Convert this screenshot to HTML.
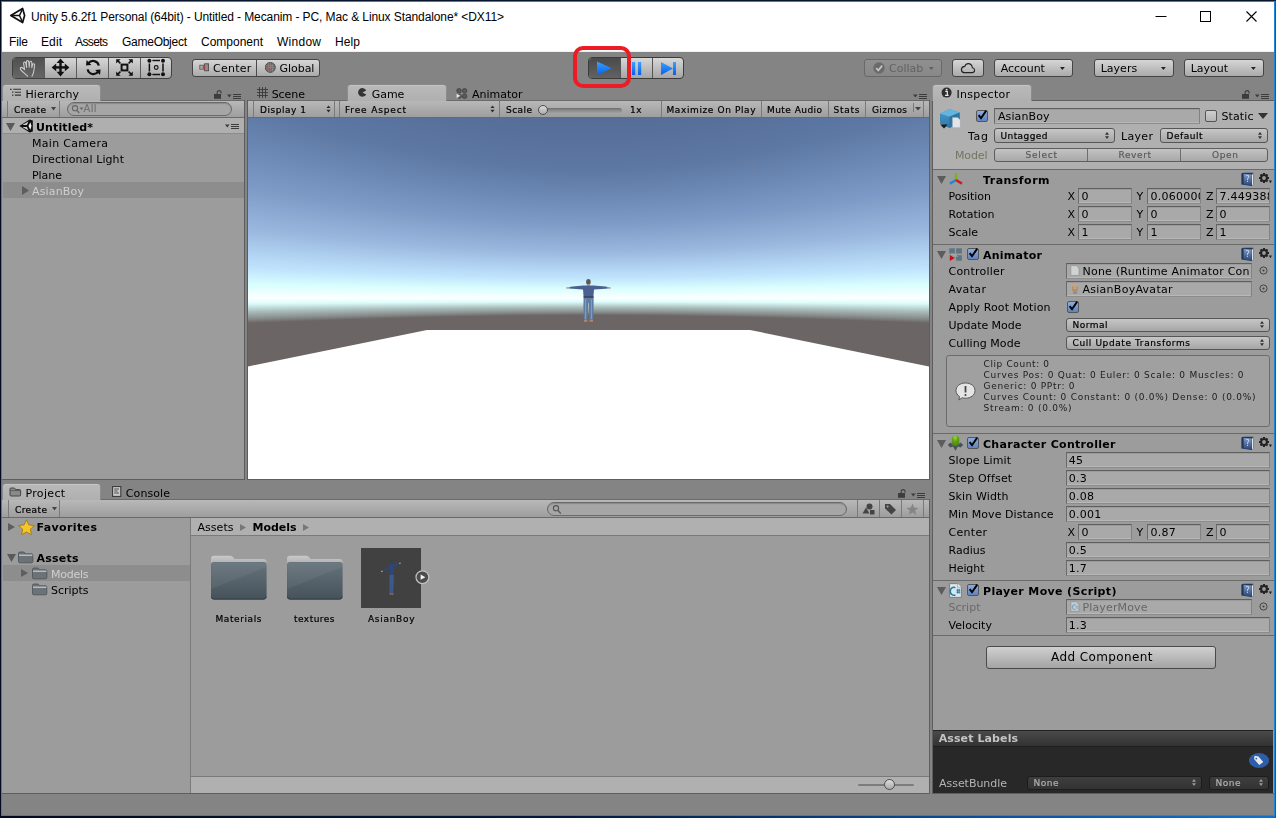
<!DOCTYPE html>
<html><head><meta charset="utf-8"><title>Unity</title>
<style>
html,body{margin:0;padding:0;}
body{width:1276px;height:818px;overflow:hidden;background:#848484;position:relative;}
#win{position:absolute;left:0;top:0;width:1276px;height:818px;overflow:hidden;background:#848484;}
.a{position:absolute;box-sizing:border-box;}
.t{position:absolute;white-space:pre;line-height:normal;}
.btn{border:1px solid #4c4c4c;background:linear-gradient(#d2d2d2,#a8a8a8);}
.fld{border:1px solid #6d6d6d;border-top-color:#5a5a5a;background:#a8a8a8;}
.pop{border:1px solid #585858;border-radius:3px;background:linear-gradient(#c4c4c4,#a4a4a4);}
#u{position:absolute;left:0;top:0;width:1276px;height:818px;will-change:transform;}

</style></head>
<body>
<div id="win">
<div class="a" style="left:0px;top:0px;width:1276px;height:818px;background:linear-gradient(to right,#020a1e 0%,#031a3e 45%,#0a4c9a 75%,#0f72d0 100%);"></div>
<div class="a" style="left:0px;top:0px;width:1276px;height:1px;background:#06162e;"></div>
<div class="a" style="left:0px;top:0px;width:1px;height:818px;background:#020a1e;"></div>
<div class="a" style="left:1px;top:1px;width:1275px;height:815px;background:#1e86dc;"></div>
<div class="a" style="left:1275px;top:1px;width:1px;height:817px;background:#0c5cb4;"></div>
<div class="a" style="left:2px;top:2px;width:1272px;height:813px;background:#848484;"></div>
<div class="a" style="left:2px;top:2px;width:1272px;height:50px;background:#fff;border-bottom:1px solid #f0f0f0;"></div>
<svg class="a" style="left:9px;top:6px;" width="18" height="19" viewBox="0 0 18 19"><path d="M1.8 9.5L13.6 2.4L15.6 9.5L13.6 16.6Z" fill="none" stroke="#111" stroke-width="1.7" stroke-linejoin="round"/><path d="M2 9.5H10.5L13.6 2.8M10.5 9.5L13.6 16.2" stroke="#111" stroke-width="1.5" fill="none"/></svg>
<span class="t" style='left:31px;top:10px;font:12px "Liberation Sans", sans-serif;color:#000;letter-spacing:-0.096px;'>Unity 5.6.2f1 Personal (64bit) - Untitled - Mecanim - PC, Mac &amp; Linux Standalone* &lt;DX11&gt;</span>
<svg class="a" style="left:1150px;top:5px;" width="120" height="24" viewBox="0 0 120 24"><path d="M5.5 11.5H16.5" stroke="#000" stroke-width="1"/><rect x="50.5" y="6.5" width="10" height="10" fill="none" stroke="#000"/><path d="M96.5 6.5L106.5 16.5M106.5 6.5L96.5 16.5" stroke="#000" stroke-width="1.1"/></svg>
<span class="t" style='left:9px;top:35px;font:12px "Liberation Sans", sans-serif;color:#000;letter-spacing:-0.115px;'>File</span>
<span class="t" style='left:41px;top:35px;font:12px "Liberation Sans", sans-serif;color:#000;letter-spacing:0.104px;'>Edit</span>
<span class="t" style='left:75px;top:35px;font:12px "Liberation Sans", sans-serif;color:#000;letter-spacing:-0.603px;'>Assets</span>
<span class="t" style='left:122px;top:35px;font:12px "Liberation Sans", sans-serif;color:#000;letter-spacing:-0.262px;'>GameObject</span>
<span class="t" style='left:201px;top:35px;font:12px "Liberation Sans", sans-serif;color:#000;letter-spacing:-0.006px;'>Component</span>
<span class="t" style='left:277px;top:35px;font:12px "Liberation Sans", sans-serif;color:#000;letter-spacing:0.263px;'>Window</span>
<span class="t" style='left:335px;top:35px;font:12px "Liberation Sans", sans-serif;color:#000;letter-spacing:0.104px;'>Help</span>
<div id="u">
<div class="a" style="left:12px;top:57px;width:160px;height:22px;border:1px solid #404040;border-radius:4px;background:linear-gradient(#d6d6d6,#a9a9a9);overflow:hidden;"><div class="a" style="left:0;top:0;width:32px;height:20px;background:linear-gradient(#505050,#666);"></div><div class="a" style="left:31px;top:0;width:1px;height:20px;background:#5a5a5a;"></div><div class="a" style="left:63px;top:0;width:1px;height:20px;background:#5a5a5a;"></div><div class="a" style="left:95px;top:0;width:1px;height:20px;background:#5a5a5a;"></div><div class="a" style="left:127px;top:0;width:1px;height:20px;background:#5a5a5a;"></div></div>
<div class="a" style="left:192px;top:59px;width:128px;height:18px;border:1px solid #454545;border-radius:3px;background:linear-gradient(#d6d6d6,#aaaaaa);"><div class="a" style="left:63px;top:0;width:1px;height:16px;background:#4a4a4a;"></div></div>
<span class="t" style='left:213px;top:61.5px;font:11px "DejaVu Sans", sans-serif;color:#000;letter-spacing:0.274px;'>Center</span>
<span class="t" style='left:279.6px;top:61.5px;font:11px "DejaVu Sans", sans-serif;color:#000;letter-spacing:-0.059px;'>Global</span>
<svg class="a" style="left:199px;top:63px;" width="11" height="9" viewBox="0 0 11 9"><rect x="0.8" y="2.2" width="4" height="4" fill="#a8a8a8" stroke="#555" stroke-width="0.8"/><rect x="5.6" y="0.8" width="4" height="7" fill="#8c8c8c" stroke="#444" stroke-width="0.8"/><rect x="3.8" y="3.2" width="2.4" height="2.2" fill="#e03030"/></svg>
<svg class="a" style="left:265px;top:62px;" width="11" height="11" viewBox="0 0 11 11"><circle cx="5.3" cy="5.4" r="5" fill="#6a6a6a" stroke="#3c3c3c" stroke-width="0.8"/><path d="M1 3.6H9.6M0.5 5.6H10M1 7.6H9.6M3.4 0.8V10M5.4 0.4V10.4M7.4 0.8V10" stroke="#8e8e8e" stroke-width="0.6"/><path d="M2.6 2.6V7.4H7" fill="none" stroke="#ee3a3a" stroke-width="1.3"/></svg>
<div class="a" style="left:588px;top:57px;width:96px;height:22px;border:1px solid #3c3c3c;border-radius:4px;background:linear-gradient(#d8d8d8,#a6a6a6);overflow:hidden;"><div class="a" style="left:0;top:0;width:32px;height:20px;background:linear-gradient(#4a4a4a,#626262);"></div><div class="a" style="left:31px;top:0;width:1px;height:20px;background:#555;"></div><div class="a" style="left:63px;top:0;width:1px;height:20px;background:#555;"></div></div>
<svg class="a" style="left:588px;top:57px;" width="96" height="22" viewBox="0 0 96 22"><defs><linearGradient id="bl" x1="0" y1="0" x2="0" y2="1"><stop offset="0" stop-color="#3aa0ff"/><stop offset="1" stop-color="#0860ea"/></linearGradient></defs><path d="M9 4.5L23.5 11.3L9 18.3Z" fill="url(#bl)"/><rect x="44" y="5" width="3.2" height="13" fill="url(#bl)"/><rect x="50" y="5" width="3.2" height="13" fill="url(#bl)"/><path d="M73 5L85 11.5L73 18Z" fill="url(#bl)"/><rect x="85" y="5" width="3" height="13" fill="url(#bl)"/></svg>
<div class="a" style="left:573px;top:46px;width:58px;height:42px;border:4.5px solid #ed1c24;border-radius:10px;"></div>
<div class="a" style="left:864px;top:59px;width:78px;height:18px;border:1px solid #686868;border-radius:3px;background:linear-gradient(#909090,#888888);"></div>
<svg class="a" style="left:873px;top:62px;" width="12" height="12" viewBox="0 0 12 12"><circle cx="6" cy="6" r="5.7" fill="#6a6a6a"/><path d="M3.2 6.2L5.3 8.4L9.2 3.6" fill="none" stroke="#c4c4c4" stroke-width="1.7"/></svg>
<span class="t" style='left:889px;top:61.5px;font:11px "DejaVu Sans", sans-serif;color:#626262;letter-spacing:0.010px;'>Collab</span>
<svg class="a" style="left:929px;top:67px;" width="5" height="3" viewBox="0 0 5 3"><path d="M0 0H4.6L2.3 3Z" fill="#5e5e5e"/></svg>
<div class="a" style="left:952px;top:59px;width:32px;height:18px;border:1px solid #454545;border-radius:3px;background:linear-gradient(#d6d6d6,#aaaaaa);"></div>
<svg class="a" style="left:960px;top:62px;" width="16" height="12" viewBox="0 0 16 12"><path d="M4 10.6H12.2Q14.6 10.4 14.6 8.2Q14.6 6.2 12.4 5.8Q12 2.2 8.8 1.6Q5.8 1.4 4.8 4.4Q1.6 4.6 1.4 7.6Q1.6 10.4 4 10.6Z" fill="none" stroke="#222" stroke-width="1.1"/></svg>
<div class="a" style="left:994px;top:59px;width:79px;height:18px;border:1px solid #454545;border-radius:3px;background:linear-gradient(#d6d6d6,#aaaaaa);"></div>
<span class="t" style='left:1000.7px;top:61.5px;font:11px "DejaVu Sans", sans-serif;color:#000;letter-spacing:-0.037px;'>Account</span>
<svg class="a" style="left:1060px;top:67px;" width="5" height="3" viewBox="0 0 5 3"><path d="M0 0H4.8L2.4 3Z" fill="#222"/></svg>
<div class="a" style="left:1094px;top:59px;width:80px;height:18px;border:1px solid #454545;border-radius:3px;background:linear-gradient(#d6d6d6,#aaaaaa);"></div>
<span class="t" style='left:1100.7px;top:61.5px;font:11px "DejaVu Sans", sans-serif;color:#000;letter-spacing:0.019px;'>Layers</span>
<svg class="a" style="left:1161px;top:67px;" width="5" height="3" viewBox="0 0 5 3"><path d="M0 0H4.8L2.4 3Z" fill="#222"/></svg>
<div class="a" style="left:1184px;top:59px;width:80px;height:18px;border:1px solid #454545;border-radius:3px;background:linear-gradient(#d6d6d6,#aaaaaa);"></div>
<span class="t" style='left:1190.7px;top:61.5px;font:11px "DejaVu Sans", sans-serif;color:#000;letter-spacing:-0.001px;'>Layout</span>
<svg class="a" style="left:1251px;top:67px;" width="5" height="3" viewBox="0 0 5 3"><path d="M0 0H4.8L2.4 3Z" fill="#222"/></svg>
<div class="a" style="left:2px;top:100px;width:243px;height:380px;background:#9c9c9c;border:1px solid #5e5e5e;border-left:none;"></div>
<div class="a" style="left:2px;top:100px;width:242px;height:18px;background:linear-gradient(#b8b8b8,#9e9e9e);border-top:1px solid #6a6a6a;border-bottom:1px solid #6a6a6a;"></div>
<div class="a" style="left:2px;top:84px;width:99px;height:17px;background:linear-gradient(#b9b9b9,#b0b0b0);border:1px solid rgba(0,0,0,0.22);border-bottom:none;border-radius:4px 4px 0 0;box-shadow:inset 0 1px 0 rgba(255,255,255,0.18);"></div>
<span class="t" style='left:25.5px;top:88px;font:11px "DejaVu Sans", sans-serif;color:#000;letter-spacing:0.029px;'>Hierarchy</span>
<svg class="a" style="left:9px;top:88px;" width="13" height="9" viewBox="0 0 13 9"><path d="M1 1.3H2.6M3 4.2H4.4M3 7.1H4.4" stroke="#333" stroke-width="1.2"/><path d="M4.2 1.3H12M5.8 4.2H12M5.8 7.1H12" stroke="#333" stroke-width="1.1"/></svg>
<svg class="a" style="left:214px;top:90px;" width="8" height="9" viewBox="0 0 8 9"><rect x="0" y="4" width="7" height="4.8" fill="#3c3c3c"/><path d="M3.2 4.2V2.6A1.9 2 0 0 1 7 2.6V3.4" fill="none" stroke="#3c3c3c" stroke-width="1.1"/></svg>
<svg class="a" style="left:227px;top:94px;" width="14" height="5" viewBox="0 0 14 5"><path d="M0 0.6H4.6L2.3 3.4Z" fill="#3c3c3c"/><path d="M6 0.5H14M6 2.5H14M6 4.5H14" stroke="#3c3c3c" stroke-width="1"/></svg>
<div class="a" style="left:247px;top:100px;width:683px;height:380px;background:#9c9c9c;border:1px solid #5e5e5e;"></div>
<div class="a" style="left:248px;top:100px;width:681px;height:18px;background:linear-gradient(#b8b8b8,#9e9e9e);border-top:1px solid #6a6a6a;border-bottom:1px solid #6a6a6a;"></div>
<div class="a" style="left:347px;top:84px;width:100px;height:17px;background:linear-gradient(#b9b9b9,#b0b0b0);border:1px solid rgba(0,0,0,0.22);border-bottom:none;border-radius:4px 4px 0 0;box-shadow:inset 0 1px 0 rgba(255,255,255,0.18);"></div>
<svg class="a" style="left:257px;top:87px;" width="11" height="11" viewBox="0 0 11 11"><path d="M2.5 0V11M5.5 0V11M8.5 0V11M0 2.5H11M0 5.5H11M0 8.5H11" stroke="#3a3a3a" stroke-width="0.9"/></svg>
<span class="t" style='left:271.7px;top:88px;font:11px "DejaVu Sans", sans-serif;color:#000;letter-spacing:-0.062px;'>Scene</span>
<svg class="a" style="left:358px;top:88px;" width="9" height="9" viewBox="0 0 9 9"><path d="M4.4 4.4L8.2 2.4A4.3 4.3 0 1 0 8.2 6.4Z" fill="#333"/></svg>
<span class="t" style='left:371.8px;top:88px;font:11px "DejaVu Sans", sans-serif;color:#000;letter-spacing:-0.083px;'>Game</span>
<svg class="a" style="left:456px;top:88px;" width="12" height="11" viewBox="0 0 12 11"><g fill="#5a5a5a" stroke="#3e3e3e" stroke-width="0.7"><circle cx="3" cy="2.8" r="2.3"/><circle cx="8.6" cy="2.8" r="2.3"/><circle cx="8.6" cy="8.2" r="2.3"/><circle cx="3.4" cy="8.2" r="2.1"/></g><path d="M0.4 5.4L4.6 7.8L0.4 10.4Z" fill="#e8e8e8" stroke="#777" stroke-width="0.4"/></svg>
<span class="t" style='left:472px;top:88px;font:11px "DejaVu Sans", sans-serif;color:#000;letter-spacing:0.003px;'>Animator</span>
<svg class="a" style="left:913px;top:94px;" width="14" height="5" viewBox="0 0 14 5"><path d="M0 0.6H4.6L2.3 3.4Z" fill="#3c3c3c"/><path d="M6 0.5H14M6 2.5H14M6 4.5H14" stroke="#3c3c3c" stroke-width="1"/></svg>
<div class="a" style="left:932px;top:100px;width:342px;height:694px;background:#9c9c9c;border:1px solid #5e5e5e;border-right:none;"></div>
<div class="a" style="left:933px;top:101px;width:341px;height:68px;background:#b0b0b0;"></div>
<div class="a" style="left:932px;top:84px;width:100px;height:17px;background:linear-gradient(#b9b9b9,#b0b0b0);border:1px solid rgba(0,0,0,0.22);border-bottom:none;border-radius:4px 4px 0 0;box-shadow:inset 0 1px 0 rgba(255,255,255,0.18);"></div>
<svg class="a" style="left:941px;top:87px;" width="11" height="11" viewBox="0 0 11 11"><circle cx="5.6" cy="5.6" r="5" fill="#2e2e2e"/><path d="M4.2 4.4H6.3V8.2M4 8.4H7.6" stroke="#e8e8e8" stroke-width="1.2" fill="none"/><circle cx="5.6" cy="2.6" r="0.9" fill="#e8e8e8"/></svg>
<span class="t" style='left:956.6px;top:88px;font:11px "DejaVu Sans", sans-serif;color:#000;letter-spacing:0.261px;'>Inspector</span>
<svg class="a" style="left:1242px;top:90px;" width="8" height="9" viewBox="0 0 8 9"><rect x="0" y="4" width="7" height="4.8" fill="#3c3c3c"/><path d="M3.2 4.2V2.6A1.9 2 0 0 1 7 2.6V3.4" fill="none" stroke="#3c3c3c" stroke-width="1.1"/></svg>
<svg class="a" style="left:1255px;top:94px;" width="14" height="5" viewBox="0 0 14 5"><path d="M0 0.6H4.6L2.3 3.4Z" fill="#3c3c3c"/><path d="M6 0.5H14M6 2.5H14M6 4.5H14" stroke="#3c3c3c" stroke-width="1"/></svg>
<div class="a" style="left:2px;top:499px;width:928px;height:295px;background:#9c9c9c;border:1px solid #5e5e5e;border-left:none;"></div>
<div class="a" style="left:2px;top:499px;width:927px;height:19px;background:linear-gradient(#b8b8b8,#9e9e9e);border-top:1px solid #6a6a6a;border-bottom:1px solid #6a6a6a;"></div>
<div class="a" style="left:2px;top:483px;width:99px;height:17px;background:linear-gradient(#b9b9b9,#b0b0b0);border:1px solid rgba(0,0,0,0.22);border-bottom:none;border-radius:4px 4px 0 0;box-shadow:inset 0 1px 0 rgba(255,255,255,0.18);"></div>
<svg class="a" style="left:9px;top:487px;" width="13" height="10" viewBox="0 0 13 10"><path d="M1 2Q1 1 2 1H5Q5.8 1 6.2 1.8L6.6 2.6H10.6Q11.6 2.6 11.6 3.6V8Q11.6 9 10.6 9H2Q1 9 1 8Z" fill="#8a8a8a" stroke="#3c3c3c" stroke-width="0.9"/><path d="M1.4 3.6H11.2" stroke="#4a4a4a" stroke-width="0.7"/></svg>
<span class="t" style='left:25.4px;top:487px;font:11px "DejaVu Sans", sans-serif;color:#000;letter-spacing:0.360px;'>Project</span>
<svg class="a" style="left:112px;top:486px;" width="10" height="11" viewBox="0 0 10 11"><rect x="0.6" y="0.6" width="8.2" height="9.8" fill="#c8c8c8" stroke="#333" stroke-width="1"/><path d="M2.2 3H7M2.2 5H5.6M2.2 7H7" stroke="#444" stroke-width="0.9"/></svg>
<span class="t" style='left:125.8px;top:487px;font:11px "DejaVu Sans", sans-serif;color:#000;letter-spacing:0.088px;'>Console</span>
<svg class="a" style="left:898px;top:489px;" width="8" height="9" viewBox="0 0 8 9"><rect x="0" y="4" width="7" height="4.8" fill="#3c3c3c"/><path d="M3.2 4.2V2.6A1.9 2 0 0 1 7 2.6V3.4" fill="none" stroke="#3c3c3c" stroke-width="1.1"/></svg>
<svg class="a" style="left:911px;top:493px;" width="14" height="5" viewBox="0 0 14 5"><path d="M0 0.6H4.6L2.3 3.4Z" fill="#3c3c3c"/><path d="M6 0.5H14M6 2.5H14M6 4.5H14" stroke="#3c3c3c" stroke-width="1"/></svg>
<div class="a" style="left:2px;top:794px;width:1272px;height:21px;background:#848484;"></div>
<div class="a" style="left:7px;top:101px;width:1px;height:16px;background:#7a7a7a;"></div>
<div class="a" style="left:59px;top:101px;width:1px;height:16px;background:#7a7a7a;"></div>
<span class="t" style='left:14px;top:105px;font:9px "DejaVu Sans", sans-serif;color:#000;letter-spacing:0.419px;-webkit-text-stroke:0.2px #000;'>Create</span>
<svg class="a" style="left:51px;top:107px;" width="5" height="4" viewBox="0 0 5 4"><path d="M0 0H5L2.5 3.5Z" fill="#444"/></svg>
<div class="a" style="left:67px;top:102px;width:165px;height:14px;border:1px solid #6a6a6a;border-radius:7px;background:#a6a6a6;box-shadow:inset 0 1px 1px #8a8a8a;"></div>
<svg class="a" style="left:71px;top:104px;" width="14" height="11" viewBox="0 0 14 11"><circle cx="4" cy="4.2" r="2.6" fill="none" stroke="#666" stroke-width="1.1"/><path d="M6 6.4L8.3 9" stroke="#666" stroke-width="1.3"/><path d="M8.5 3.5H12.5L10.5 6Z" fill="#666"/></svg>
<span class="t" style='left:83.5px;top:103px;font:10px "DejaVu Sans", sans-serif;color:#757575;letter-spacing:0.297px;-webkit-text-stroke:0.2px #757575;'>All</span>
<div class="a" style="left:3px;top:118px;width:241px;height:16px;background:#afafaf;border-bottom:1px solid #8b8b8b;"></div>
<svg class="a" style="left:6px;top:123px;" width="9" height="8" viewBox="0 0 9 8"><path d="M0 0H9L4.5 8Z" fill="#5a5a5a"/></svg>
<span class="t" style='left:36px;top:121px;font:bold 11px "DejaVu Sans", sans-serif;color:#000;letter-spacing:0.135px;'>Untitled*</span>
<span class="t" style='left:32px;top:137px;font:11px "DejaVu Sans", sans-serif;color:#000;letter-spacing:0.306px;'>Main Camera</span>
<span class="t" style='left:32px;top:153px;font:11px "DejaVu Sans", sans-serif;color:#000;letter-spacing:0.097px;'>Directional Light</span>
<span class="t" style='left:32px;top:169px;font:11px "DejaVu Sans", sans-serif;color:#000;letter-spacing:-0.043px;'>Plane</span>
<div class="a" style="left:3px;top:182px;width:241px;height:16px;background:#8d8d8d;"></div>
<svg class="a" style="left:22px;top:186px;" width="7" height="9" viewBox="0 0 7 9"><path d="M0 0L7 4.5L0 9Z" fill="#5e5e5e"/></svg>
<span class="t" style='left:32px;top:185px;font:11px "DejaVu Sans", sans-serif;color:#cfcfcf;letter-spacing:0.170px;'>AsianBoy</span>
<div class="a" style="left:253px;top:101px;width:1px;height:16px;background:#7a7a7a;"></div>
<div class="a" style="left:334px;top:101px;width:1px;height:16px;background:#7a7a7a;"></div>
<div class="a" style="left:339px;top:101px;width:1px;height:16px;background:#7a7a7a;"></div>
<div class="a" style="left:499px;top:101px;width:1px;height:16px;background:#7a7a7a;"></div>
<div class="a" style="left:661px;top:101px;width:1px;height:16px;background:#7a7a7a;"></div>
<div class="a" style="left:761px;top:101px;width:1px;height:16px;background:#7a7a7a;"></div>
<div class="a" style="left:828px;top:101px;width:1px;height:16px;background:#7a7a7a;"></div>
<div class="a" style="left:865px;top:101px;width:1px;height:16px;background:#7a7a7a;"></div>
<div class="a" style="left:923px;top:101px;width:1px;height:16px;background:#7a7a7a;"></div>
<span class="t" style='left:260px;top:105px;font:9px "DejaVu Sans", sans-serif;color:#000;letter-spacing:0.529px;-webkit-text-stroke:0.2px #000;'>Display 1</span>
<span class="t" style='left:345px;top:105px;font:9px "DejaVu Sans", sans-serif;color:#000;letter-spacing:0.845px;-webkit-text-stroke:0.2px #000;'>Free Aspect</span>
<span class="t" style='left:506px;top:105px;font:9px "DejaVu Sans", sans-serif;color:#000;letter-spacing:0.445px;-webkit-text-stroke:0.2px #000;'>Scale</span>
<span class="t" style='left:630px;top:105px;font:9px "DejaVu Sans", sans-serif;color:#000;letter-spacing:0.438px;-webkit-text-stroke:0.2px #000;'>1x</span>
<span class="t" style='left:666.5px;top:105px;font:9px "DejaVu Sans", sans-serif;color:#000;letter-spacing:0.605px;-webkit-text-stroke:0.2px #000;'>Maximize On Play</span>
<span class="t" style='left:767px;top:105px;font:9px "DejaVu Sans", sans-serif;color:#000;letter-spacing:0.446px;-webkit-text-stroke:0.2px #000;'>Mute Audio</span>
<span class="t" style='left:833.5px;top:105px;font:9px "DejaVu Sans", sans-serif;color:#000;letter-spacing:0.754px;-webkit-text-stroke:0.2px #000;'>Stats</span>
<span class="t" style='left:872px;top:105px;font:9px "DejaVu Sans", sans-serif;color:#000;letter-spacing:0.366px;-webkit-text-stroke:0.2px #000;'>Gizmos</span>
<svg class="a" style="left:326px;top:105px;" width="5" height="8" viewBox="0 0 5 8"><path d="M0.4 3L2.5 0.4L4.6 3Z M0.4 4.8H4.6L2.5 7.4Z" fill="#2c2c2c"/></svg>
<svg class="a" style="left:490px;top:105px;" width="5" height="8" viewBox="0 0 5 8"><path d="M0.4 3L2.5 0.4L4.6 3Z M0.4 4.8H4.6L2.5 7.4Z" fill="#2c2c2c"/></svg>
<div class="a" style="left:913px;top:103px;width:1px;height:9px;background:#7a7a7a;"></div>
<svg class="a" style="left:915px;top:107px;" width="6" height="4" viewBox="0 0 6 4"><path d="M0 0H6L3 3.5Z" fill="#444"/></svg>
<div class="a" style="left:543px;top:108px;width:79px;height:5px;background:linear-gradient(#6e6e6e,#8c8c8c 50%,#a0a0a0);border-radius:2.5px;"></div>
<div class="a" style="left:538px;top:105px;width:10px;height:10px;border:1px solid #4e4e4e;border-radius:5px;background:linear-gradient(#dcdcdc,#aaa);"></div>
<svg class="a" style="left:248px;top:118px;" width="681" height="361" viewBox="0 0 681 361"><defs><linearGradient id="sky" gradientUnits="userSpaceOnUse" x1="0" y1="-0.6" x2="0" y2="0.054"><stop offset="0.0000" stop-color="#546b95"/><stop offset="0.2894" stop-color="#5c78a3"/><stop offset="0.4183" stop-color="#6b87b3"/><stop offset="0.5541" stop-color="#7e9bc7"/><stop offset="0.6901" stop-color="#9ab7de"/><stop offset="0.7945" stop-color="#b9dcf8"/><stop offset="0.8188" stop-color="#c0e4fc"/><stop offset="0.8694" stop-color="#d8fefe"/><stop offset="0.9174" stop-color="#fcffff"/><stop offset="0.9352" stop-color="#dcfcfc"/><stop offset="0.9616" stop-color="#a9bdbb"/><stop offset="0.9861" stop-color="#868a89"/><stop offset="1.0000" stop-color="#6b6665"/></linearGradient></defs><rect x="0" y="-1" width="8.6" height="2" fill="url(#sky)" transform="translate(0,180.3) scale(1,459.6)"/><rect x="8" y="-1" width="8.6" height="2" fill="url(#sky)" transform="translate(0,180.3) scale(1,453.7)"/><rect x="16" y="-1" width="8.6" height="2" fill="url(#sky)" transform="translate(0,180.3) scale(1,448.0)"/><rect x="24" y="-1" width="8.6" height="2" fill="url(#sky)" transform="translate(0,180.3) scale(1,442.3)"/><rect x="32" y="-1" width="8.6" height="2" fill="url(#sky)" transform="translate(0,180.3) scale(1,436.7)"/><rect x="40" y="-1" width="8.6" height="2" fill="url(#sky)" transform="translate(0,180.3) scale(1,431.1)"/><rect x="48" y="-1" width="8.6" height="2" fill="url(#sky)" transform="translate(0,180.3) scale(1,425.7)"/><rect x="56" y="-1" width="8.6" height="2" fill="url(#sky)" transform="translate(0,180.3) scale(1,420.3)"/><rect x="64" y="-1" width="8.6" height="2" fill="url(#sky)" transform="translate(0,180.3) scale(1,415.0)"/><rect x="72" y="-1" width="8.6" height="2" fill="url(#sky)" transform="translate(0,180.3) scale(1,409.8)"/><rect x="80" y="-1" width="8.6" height="2" fill="url(#sky)" transform="translate(0,180.3) scale(1,404.7)"/><rect x="88" y="-1" width="8.6" height="2" fill="url(#sky)" transform="translate(0,180.3) scale(1,399.7)"/><rect x="96" y="-1" width="8.6" height="2" fill="url(#sky)" transform="translate(0,180.3) scale(1,394.7)"/><rect x="104" y="-1" width="8.6" height="2" fill="url(#sky)" transform="translate(0,180.3) scale(1,389.9)"/><rect x="112" y="-1" width="8.6" height="2" fill="url(#sky)" transform="translate(0,180.3) scale(1,385.2)"/><rect x="120" y="-1" width="8.6" height="2" fill="url(#sky)" transform="translate(0,180.3) scale(1,380.6)"/><rect x="128" y="-1" width="8.6" height="2" fill="url(#sky)" transform="translate(0,180.3) scale(1,376.1)"/><rect x="136" y="-1" width="8.6" height="2" fill="url(#sky)" transform="translate(0,180.3) scale(1,371.7)"/><rect x="144" y="-1" width="8.6" height="2" fill="url(#sky)" transform="translate(0,180.3) scale(1,367.5)"/><rect x="152" y="-1" width="8.6" height="2" fill="url(#sky)" transform="translate(0,180.3) scale(1,363.3)"/><rect x="160" y="-1" width="8.6" height="2" fill="url(#sky)" transform="translate(0,180.3) scale(1,359.3)"/><rect x="168" y="-1" width="8.6" height="2" fill="url(#sky)" transform="translate(0,180.3) scale(1,355.5)"/><rect x="176" y="-1" width="8.6" height="2" fill="url(#sky)" transform="translate(0,180.3) scale(1,351.8)"/><rect x="184" y="-1" width="8.6" height="2" fill="url(#sky)" transform="translate(0,180.3) scale(1,348.2)"/><rect x="192" y="-1" width="8.6" height="2" fill="url(#sky)" transform="translate(0,180.3) scale(1,344.7)"/><rect x="200" y="-1" width="8.6" height="2" fill="url(#sky)" transform="translate(0,180.3) scale(1,341.5)"/><rect x="208" y="-1" width="8.6" height="2" fill="url(#sky)" transform="translate(0,180.3) scale(1,338.4)"/><rect x="216" y="-1" width="8.6" height="2" fill="url(#sky)" transform="translate(0,180.3) scale(1,335.4)"/><rect x="224" y="-1" width="8.6" height="2" fill="url(#sky)" transform="translate(0,180.3) scale(1,332.6)"/><rect x="232" y="-1" width="8.6" height="2" fill="url(#sky)" transform="translate(0,180.3) scale(1,330.0)"/><rect x="240" y="-1" width="8.6" height="2" fill="url(#sky)" transform="translate(0,180.3) scale(1,327.5)"/><rect x="248" y="-1" width="8.6" height="2" fill="url(#sky)" transform="translate(0,180.3) scale(1,325.3)"/><rect x="256" y="-1" width="8.6" height="2" fill="url(#sky)" transform="translate(0,180.3) scale(1,323.2)"/><rect x="264" y="-1" width="8.6" height="2" fill="url(#sky)" transform="translate(0,180.3) scale(1,321.3)"/><rect x="272" y="-1" width="8.6" height="2" fill="url(#sky)" transform="translate(0,180.3) scale(1,319.6)"/><rect x="280" y="-1" width="8.6" height="2" fill="url(#sky)" transform="translate(0,180.3) scale(1,318.1)"/><rect x="288" y="-1" width="8.6" height="2" fill="url(#sky)" transform="translate(0,180.3) scale(1,316.7)"/><rect x="296" y="-1" width="8.6" height="2" fill="url(#sky)" transform="translate(0,180.3) scale(1,315.6)"/><rect x="304" y="-1" width="8.6" height="2" fill="url(#sky)" transform="translate(0,180.3) scale(1,314.7)"/><rect x="312" y="-1" width="8.6" height="2" fill="url(#sky)" transform="translate(0,180.3) scale(1,314.0)"/><rect x="320" y="-1" width="8.6" height="2" fill="url(#sky)" transform="translate(0,180.3) scale(1,313.4)"/><rect x="328" y="-1" width="8.6" height="2" fill="url(#sky)" transform="translate(0,180.3) scale(1,313.1)"/><rect x="336" y="-1" width="8.6" height="2" fill="url(#sky)" transform="translate(0,180.3) scale(1,313.0)"/><rect x="344" y="-1" width="8.6" height="2" fill="url(#sky)" transform="translate(0,180.3) scale(1,313.1)"/><rect x="352" y="-1" width="8.6" height="2" fill="url(#sky)" transform="translate(0,180.3) scale(1,313.4)"/><rect x="360" y="-1" width="8.6" height="2" fill="url(#sky)" transform="translate(0,180.3) scale(1,313.9)"/><rect x="368" y="-1" width="8.6" height="2" fill="url(#sky)" transform="translate(0,180.3) scale(1,314.6)"/><rect x="376" y="-1" width="8.6" height="2" fill="url(#sky)" transform="translate(0,180.3) scale(1,315.5)"/><rect x="384" y="-1" width="8.6" height="2" fill="url(#sky)" transform="translate(0,180.3) scale(1,316.6)"/><rect x="392" y="-1" width="8.6" height="2" fill="url(#sky)" transform="translate(0,180.3) scale(1,317.9)"/><rect x="400" y="-1" width="8.6" height="2" fill="url(#sky)" transform="translate(0,180.3) scale(1,319.4)"/><rect x="408" y="-1" width="8.6" height="2" fill="url(#sky)" transform="translate(0,180.3) scale(1,321.1)"/><rect x="416" y="-1" width="8.6" height="2" fill="url(#sky)" transform="translate(0,180.3) scale(1,322.9)"/><rect x="424" y="-1" width="8.6" height="2" fill="url(#sky)" transform="translate(0,180.3) scale(1,325.0)"/><rect x="432" y="-1" width="8.6" height="2" fill="url(#sky)" transform="translate(0,180.3) scale(1,327.2)"/><rect x="440" y="-1" width="8.6" height="2" fill="url(#sky)" transform="translate(0,180.3) scale(1,329.7)"/><rect x="448" y="-1" width="8.6" height="2" fill="url(#sky)" transform="translate(0,180.3) scale(1,332.3)"/><rect x="456" y="-1" width="8.6" height="2" fill="url(#sky)" transform="translate(0,180.3) scale(1,335.0)"/><rect x="464" y="-1" width="8.6" height="2" fill="url(#sky)" transform="translate(0,180.3) scale(1,338.0)"/><rect x="472" y="-1" width="8.6" height="2" fill="url(#sky)" transform="translate(0,180.3) scale(1,341.1)"/><rect x="480" y="-1" width="8.6" height="2" fill="url(#sky)" transform="translate(0,180.3) scale(1,344.3)"/><rect x="488" y="-1" width="8.6" height="2" fill="url(#sky)" transform="translate(0,180.3) scale(1,347.7)"/><rect x="496" y="-1" width="8.6" height="2" fill="url(#sky)" transform="translate(0,180.3) scale(1,351.3)"/><rect x="504" y="-1" width="8.6" height="2" fill="url(#sky)" transform="translate(0,180.3) scale(1,355.0)"/><rect x="512" y="-1" width="8.6" height="2" fill="url(#sky)" transform="translate(0,180.3) scale(1,358.8)"/><rect x="520" y="-1" width="8.6" height="2" fill="url(#sky)" transform="translate(0,180.3) scale(1,362.8)"/><rect x="528" y="-1" width="8.6" height="2" fill="url(#sky)" transform="translate(0,180.3) scale(1,366.9)"/><rect x="536" y="-1" width="8.6" height="2" fill="url(#sky)" transform="translate(0,180.3) scale(1,371.2)"/><rect x="544" y="-1" width="8.6" height="2" fill="url(#sky)" transform="translate(0,180.3) scale(1,375.5)"/><rect x="552" y="-1" width="8.6" height="2" fill="url(#sky)" transform="translate(0,180.3) scale(1,380.0)"/><rect x="560" y="-1" width="8.6" height="2" fill="url(#sky)" transform="translate(0,180.3) scale(1,384.6)"/><rect x="568" y="-1" width="8.6" height="2" fill="url(#sky)" transform="translate(0,180.3) scale(1,389.3)"/><rect x="576" y="-1" width="8.6" height="2" fill="url(#sky)" transform="translate(0,180.3) scale(1,394.1)"/><rect x="584" y="-1" width="8.6" height="2" fill="url(#sky)" transform="translate(0,180.3) scale(1,399.0)"/><rect x="592" y="-1" width="8.6" height="2" fill="url(#sky)" transform="translate(0,180.3) scale(1,404.0)"/><rect x="600" y="-1" width="8.6" height="2" fill="url(#sky)" transform="translate(0,180.3) scale(1,409.1)"/><rect x="608" y="-1" width="8.6" height="2" fill="url(#sky)" transform="translate(0,180.3) scale(1,414.3)"/><rect x="616" y="-1" width="8.6" height="2" fill="url(#sky)" transform="translate(0,180.3) scale(1,419.6)"/><rect x="624" y="-1" width="8.6" height="2" fill="url(#sky)" transform="translate(0,180.3) scale(1,425.0)"/><rect x="632" y="-1" width="8.6" height="2" fill="url(#sky)" transform="translate(0,180.3) scale(1,430.5)"/><rect x="640" y="-1" width="8.6" height="2" fill="url(#sky)" transform="translate(0,180.3) scale(1,436.0)"/><rect x="648" y="-1" width="8.6" height="2" fill="url(#sky)" transform="translate(0,180.3) scale(1,441.6)"/><rect x="656" y="-1" width="8.6" height="2" fill="url(#sky)" transform="translate(0,180.3) scale(1,447.3)"/><rect x="664" y="-1" width="8.6" height="2" fill="url(#sky)" transform="translate(0,180.3) scale(1,453.0)"/><rect x="672" y="-1" width="8.6" height="2" fill="url(#sky)" transform="translate(0,180.3) scale(1,458.8)"/><rect x="680" y="-1" width="8.6" height="2" fill="url(#sky)" transform="translate(0,180.3) scale(1,464.7)"/><polygon points="0,248.5 179,212 502,212 681,248.5 681,361 0,361" fill="#fff"/></svg>
<div class="a" style="left:976px;top:110px;width:12px;height:12px;border:1px solid #555;border-radius:2px;background:linear-gradient(#8dabdc,#5f84c2);"></div>
<svg class="a" style="left:976px;top:109px;" width="13" height="12" viewBox="0 0 13 12"><path d="M2.6 6.2L5 9.2L10.2 1.6" fill="none" stroke="#000" stroke-width="1.9"/></svg>
<div class="a" style="left:994px;top:108px;width:206px;height:16px;border:1px solid #828282;border-top-color:#5e5e5e;border-left-color:#6a6a6a;border-bottom-color:#8c8c8c;background:#a9a9a9;box-shadow:inset 0 1px 0 #9b9b9b,inset 0 -1px 0 #b8b8b8;"></div>
<span class="t" style='left:998px;top:110px;font:11px "DejaVu Sans", sans-serif;color:#000;letter-spacing:0.098px;'>AsianBoy</span>
<div class="a" style="left:1205px;top:110px;width:12px;height:12px;border:1px solid #555;border-radius:2px;background:linear-gradient(#cfcfcf,#b4b4b4);"></div>
<span class="t" style='left:1221.5px;top:110px;font:11px "DejaVu Sans", sans-serif;color:#000;letter-spacing:0.109px;'>Static</span>
<svg class="a" style="left:1258px;top:113px;" width="10" height="6" viewBox="0 0 10 6"><path d="M0 0H10L5 6Z" fill="#333"/></svg>
<span class="t" style='left:968px;top:130px;font:11px "DejaVu Sans", sans-serif;color:#000;letter-spacing:0.688px;'>Tag</span>
<div class="a" style="left:994px;top:128px;width:121px;height:15px;border:1px solid #565656;border-radius:3px;background:linear-gradient(#c6c6c6,#a6a6a6);"></div>
<span class="t" style='left:1000.5px;top:131px;font:9px "DejaVu Sans", sans-serif;color:#000;letter-spacing:0.426px;-webkit-text-stroke:0.2px #000;'>Untagged</span>
<svg class="a" style="left:1105px;top:132px;" width="4" height="7" viewBox="0 0 4 7"><path d="M0 2.7L2 0L4 2.7Z M0 4.3H4L2 7Z" fill="#333"/></svg>
<span class="t" style='left:1121px;top:130px;font:11px "DejaVu Sans", sans-serif;color:#000;letter-spacing:0.332px;'>Layer</span>
<div class="a" style="left:1160px;top:128px;width:108px;height:15px;border:1px solid #565656;border-radius:3px;background:linear-gradient(#c6c6c6,#a6a6a6);"></div>
<span class="t" style='left:1166.5px;top:131px;font:9px "DejaVu Sans", sans-serif;color:#000;letter-spacing:0.518px;-webkit-text-stroke:0.2px #000;'>Default</span>
<svg class="a" style="left:1258px;top:132px;" width="4" height="7" viewBox="0 0 4 7"><path d="M0 2.7L2 0L4 2.7Z M0 4.3H4L2 7Z" fill="#333"/></svg>
<span class="t" style='left:955px;top:148.5px;font:11px "DejaVu Sans", sans-serif;color:#74745f;letter-spacing:-0.133px;'>Model</span>
<div class="a" style="left:994px;top:148px;width:274px;height:14px;border:1px solid #5e5e5e;border-radius:3px;background:linear-gradient(#c3c3c3,#a8a8a8);"><div class="a" style="left:92px;top:0;width:1px;height:12px;background:#6e6e6e;"></div><div class="a" style="left:185px;top:0;width:1px;height:12px;background:#6e6e6e;"></div></div>
<span class="t" style='left:1025.5px;top:150px;font:9px "DejaVu Sans", sans-serif;color:#5a5a5a;letter-spacing:0.747px;-webkit-text-stroke:0.2px #5a5a5a;'>Select</span>
<span class="t" style='left:1118.5px;top:150px;font:9px "DejaVu Sans", sans-serif;color:#5a5a5a;letter-spacing:0.603px;-webkit-text-stroke:0.2px #5a5a5a;'>Revert</span>
<span class="t" style='left:1212px;top:150px;font:9px "DejaVu Sans", sans-serif;color:#5a5a5a;letter-spacing:0.651px;-webkit-text-stroke:0.2px #5a5a5a;'>Open</span>
<div class="a" style="left:933px;top:169px;width:341px;height:1px;background:#6a6a6a;"></div>
<svg class="a" style="left:937px;top:176px;" width="9" height="8" viewBox="0 0 9 8"><path d="M0 0H9L4.5 8Z" fill="#5c5c5c"/></svg>
<span class="t" style='left:983px;top:174px;font:bold 11px "DejaVu Sans", sans-serif;color:#000;letter-spacing:0.467px;'>Transform</span>
<svg class="a" style="left:1240px;top:172px;" width="15" height="15" viewBox="0 0 15 15"><defs><linearGradient id="bk172" x1="0" y1="0" x2="0" y2="1"><stop offset="0" stop-color="#7d9ac6"/><stop offset="1" stop-color="#2c487a"/></linearGradient></defs><path d="M1.4 1.6L3.4 0.8H13.2V12.6L11.6 14L1.4 12.6Z" fill="#1f3559"/><path d="M3.6 1.8L11.8 2.6V13.4L3.6 12.2Z" fill="url(#bk172)"/><path d="M12 2.6L13 1.4V12.4L12 13.4Z" fill="#e6e6e6"/><text x="7.7" y="10.4" font-size="8" font-family="DejaVu Sans, sans-serif" text-anchor="middle" fill="#d4deee">?</text></svg>
<svg class="a" style="left:1258px;top:172px;" width="15" height="14" viewBox="0 0 15 14"><g transform="translate(6,6)"><circle r="2.9" fill="none" stroke="#222" stroke-width="2"/><rect x="-1" y="-5" width="2" height="2.4" fill="#222" transform="rotate(0)"/><rect x="-1" y="-5" width="2" height="2.4" fill="#222" transform="rotate(45)"/><rect x="-1" y="-5" width="2" height="2.4" fill="#222" transform="rotate(90)"/><rect x="-1" y="-5" width="2" height="2.4" fill="#222" transform="rotate(135)"/><rect x="-1" y="-5" width="2" height="2.4" fill="#222" transform="rotate(180)"/><rect x="-1" y="-5" width="2" height="2.4" fill="#222" transform="rotate(225)"/><rect x="-1" y="-5" width="2" height="2.4" fill="#222" transform="rotate(270)"/><rect x="-1" y="-5" width="2" height="2.4" fill="#222" transform="rotate(315)"/></g><path d="M10.8 8.4H14L12.4 11.2Z" fill="#222"/></svg>
<span class="t" style='left:948.5px;top:190px;font:11px "DejaVu Sans", sans-serif;color:#000;letter-spacing:-0.049px;'>Position</span>
<span class="t" style='left:1067.5px;top:190px;font:11px "DejaVu Sans", sans-serif;color:#000;'>X</span>
<div class="a" style="left:1078px;top:188px;width:54px;height:16px;border:1px solid #828282;border-top-color:#5e5e5e;border-left-color:#6a6a6a;border-bottom-color:#8c8c8c;background:#a9a9a9;box-shadow:inset 0 1px 0 #9b9b9b,inset 0 -1px 0 #b8b8b8;"></div>
<div class="a" style="left:1079px;top:189px;width:52px;height:13px;overflow:hidden;"><span class="t" style='left:2.5px;top:1px;font:11px "DejaVu Sans", sans-serif;letter-spacing:0.25px;'>0</span></div>
<span class="t" style='left:1136.5px;top:190px;font:11px "DejaVu Sans", sans-serif;color:#000;'>Y</span>
<div class="a" style="left:1147px;top:188px;width:54px;height:16px;border:1px solid #828282;border-top-color:#5e5e5e;border-left-color:#6a6a6a;border-bottom-color:#8c8c8c;background:#a9a9a9;box-shadow:inset 0 1px 0 #9b9b9b,inset 0 -1px 0 #b8b8b8;"></div>
<div class="a" style="left:1148px;top:189px;width:52px;height:13px;overflow:hidden;"><span class="t" style='left:2.5px;top:1px;font:11px "DejaVu Sans", sans-serif;letter-spacing:0.25px;'>0.0600000</span></div>
<span class="t" style='left:1206px;top:190px;font:11px "DejaVu Sans", sans-serif;color:#000;'>Z</span>
<div class="a" style="left:1216px;top:188px;width:54px;height:16px;border:1px solid #828282;border-top-color:#5e5e5e;border-left-color:#6a6a6a;border-bottom-color:#8c8c8c;background:#a9a9a9;box-shadow:inset 0 1px 0 #9b9b9b,inset 0 -1px 0 #b8b8b8;"></div>
<div class="a" style="left:1217px;top:189px;width:52px;height:13px;overflow:hidden;"><span class="t" style='left:2.5px;top:1px;font:11px "DejaVu Sans", sans-serif;letter-spacing:0.25px;'>7.4493880</span></div>
<span class="t" style='left:948.5px;top:208px;font:11px "DejaVu Sans", sans-serif;color:#000;letter-spacing:-0.002px;'>Rotation</span>
<span class="t" style='left:1067.5px;top:208px;font:11px "DejaVu Sans", sans-serif;color:#000;'>X</span>
<div class="a" style="left:1078px;top:206px;width:54px;height:16px;border:1px solid #828282;border-top-color:#5e5e5e;border-left-color:#6a6a6a;border-bottom-color:#8c8c8c;background:#a9a9a9;box-shadow:inset 0 1px 0 #9b9b9b,inset 0 -1px 0 #b8b8b8;"></div>
<div class="a" style="left:1079px;top:207px;width:52px;height:13px;overflow:hidden;"><span class="t" style='left:2.5px;top:1px;font:11px "DejaVu Sans", sans-serif;letter-spacing:0.25px;'>0</span></div>
<span class="t" style='left:1136.5px;top:208px;font:11px "DejaVu Sans", sans-serif;color:#000;'>Y</span>
<div class="a" style="left:1147px;top:206px;width:54px;height:16px;border:1px solid #828282;border-top-color:#5e5e5e;border-left-color:#6a6a6a;border-bottom-color:#8c8c8c;background:#a9a9a9;box-shadow:inset 0 1px 0 #9b9b9b,inset 0 -1px 0 #b8b8b8;"></div>
<div class="a" style="left:1148px;top:207px;width:52px;height:13px;overflow:hidden;"><span class="t" style='left:2.5px;top:1px;font:11px "DejaVu Sans", sans-serif;letter-spacing:0.25px;'>0</span></div>
<span class="t" style='left:1206px;top:208px;font:11px "DejaVu Sans", sans-serif;color:#000;'>Z</span>
<div class="a" style="left:1216px;top:206px;width:54px;height:16px;border:1px solid #828282;border-top-color:#5e5e5e;border-left-color:#6a6a6a;border-bottom-color:#8c8c8c;background:#a9a9a9;box-shadow:inset 0 1px 0 #9b9b9b,inset 0 -1px 0 #b8b8b8;"></div>
<div class="a" style="left:1217px;top:207px;width:52px;height:13px;overflow:hidden;"><span class="t" style='left:2.5px;top:1px;font:11px "DejaVu Sans", sans-serif;letter-spacing:0.25px;'>0</span></div>
<span class="t" style='left:948.5px;top:226px;font:11px "DejaVu Sans", sans-serif;color:#000;letter-spacing:-0.027px;'>Scale</span>
<span class="t" style='left:1067.5px;top:226px;font:11px "DejaVu Sans", sans-serif;color:#000;'>X</span>
<div class="a" style="left:1078px;top:224px;width:54px;height:16px;border:1px solid #828282;border-top-color:#5e5e5e;border-left-color:#6a6a6a;border-bottom-color:#8c8c8c;background:#a9a9a9;box-shadow:inset 0 1px 0 #9b9b9b,inset 0 -1px 0 #b8b8b8;"></div>
<div class="a" style="left:1079px;top:225px;width:52px;height:13px;overflow:hidden;"><span class="t" style='left:2.5px;top:1px;font:11px "DejaVu Sans", sans-serif;letter-spacing:0.25px;'>1</span></div>
<span class="t" style='left:1136.5px;top:226px;font:11px "DejaVu Sans", sans-serif;color:#000;'>Y</span>
<div class="a" style="left:1147px;top:224px;width:54px;height:16px;border:1px solid #828282;border-top-color:#5e5e5e;border-left-color:#6a6a6a;border-bottom-color:#8c8c8c;background:#a9a9a9;box-shadow:inset 0 1px 0 #9b9b9b,inset 0 -1px 0 #b8b8b8;"></div>
<div class="a" style="left:1148px;top:225px;width:52px;height:13px;overflow:hidden;"><span class="t" style='left:2.5px;top:1px;font:11px "DejaVu Sans", sans-serif;letter-spacing:0.25px;'>1</span></div>
<span class="t" style='left:1206px;top:226px;font:11px "DejaVu Sans", sans-serif;color:#000;'>Z</span>
<div class="a" style="left:1216px;top:224px;width:54px;height:16px;border:1px solid #828282;border-top-color:#5e5e5e;border-left-color:#6a6a6a;border-bottom-color:#8c8c8c;background:#a9a9a9;box-shadow:inset 0 1px 0 #9b9b9b,inset 0 -1px 0 #b8b8b8;"></div>
<div class="a" style="left:1217px;top:225px;width:52px;height:13px;overflow:hidden;"><span class="t" style='left:2.5px;top:1px;font:11px "DejaVu Sans", sans-serif;letter-spacing:0.25px;'>1</span></div>
<div class="a" style="left:933px;top:244px;width:341px;height:1px;background:#6a6a6a;"></div>
<svg class="a" style="left:937px;top:251px;" width="9" height="8" viewBox="0 0 9 8"><path d="M0 0H9L4.5 8Z" fill="#5c5c5c"/></svg>
<div class="a" style="left:967px;top:248px;width:12px;height:12px;border:1px solid #555;border-radius:2px;background:linear-gradient(#8dabdc,#5f84c2);"></div>
<svg class="a" style="left:967px;top:247px;" width="13" height="12" viewBox="0 0 13 12"><path d="M2.6 6.2L5 9.2L10.2 1.6" fill="none" stroke="#000" stroke-width="1.9"/></svg>
<span class="t" style='left:983px;top:249px;font:bold 11px "DejaVu Sans", sans-serif;color:#000;letter-spacing:0.250px;'>Animator</span>
<svg class="a" style="left:1240px;top:247px;" width="15" height="15" viewBox="0 0 15 15"><defs><linearGradient id="bk247" x1="0" y1="0" x2="0" y2="1"><stop offset="0" stop-color="#7d9ac6"/><stop offset="1" stop-color="#2c487a"/></linearGradient></defs><path d="M1.4 1.6L3.4 0.8H13.2V12.6L11.6 14L1.4 12.6Z" fill="#1f3559"/><path d="M3.6 1.8L11.8 2.6V13.4L3.6 12.2Z" fill="url(#bk247)"/><path d="M12 2.6L13 1.4V12.4L12 13.4Z" fill="#e6e6e6"/><text x="7.7" y="10.4" font-size="8" font-family="DejaVu Sans, sans-serif" text-anchor="middle" fill="#d4deee">?</text></svg>
<svg class="a" style="left:1258px;top:247px;" width="15" height="14" viewBox="0 0 15 14"><g transform="translate(6,6)"><circle r="2.9" fill="none" stroke="#222" stroke-width="2"/><rect x="-1" y="-5" width="2" height="2.4" fill="#222" transform="rotate(0)"/><rect x="-1" y="-5" width="2" height="2.4" fill="#222" transform="rotate(45)"/><rect x="-1" y="-5" width="2" height="2.4" fill="#222" transform="rotate(90)"/><rect x="-1" y="-5" width="2" height="2.4" fill="#222" transform="rotate(135)"/><rect x="-1" y="-5" width="2" height="2.4" fill="#222" transform="rotate(180)"/><rect x="-1" y="-5" width="2" height="2.4" fill="#222" transform="rotate(225)"/><rect x="-1" y="-5" width="2" height="2.4" fill="#222" transform="rotate(270)"/><rect x="-1" y="-5" width="2" height="2.4" fill="#222" transform="rotate(315)"/></g><path d="M10.8 8.4H14L12.4 11.2Z" fill="#222"/></svg>
<span class="t" style='left:948.5px;top:265px;font:11px "DejaVu Sans", sans-serif;color:#000;letter-spacing:0.210px;'>Controller</span>
<div class="a" style="left:1067px;top:264px;width:184px;height:13px;overflow:hidden;"></div>
<div class="a" style="left:1066px;top:263px;width:186px;height:16px;border:1px solid #828282;border-top-color:#5e5e5e;border-left-color:#6a6a6a;border-bottom-color:#8c8c8c;background:#a9a9a9;box-shadow:inset 0 1px 0 #9b9b9b,inset 0 -1px 0 #b8b8b8;"></div>
<span class="t" style='left:1082.5px;top:265px;font:11px "DejaVu Sans", sans-serif;color:#000;letter-spacing:0.224px;'>None (Runtime Animator Con</span>
<svg class="a" style="left:1259px;top:266px;" width="9" height="9" viewBox="0 0 9 9"><circle cx="4.5" cy="4.5" r="3.6" fill="none" stroke="#444" stroke-width="1"/><circle cx="4.5" cy="4.5" r="1.1" fill="#444"/></svg>
<span class="t" style='left:948.5px;top:283px;font:11px "DejaVu Sans", sans-serif;color:#000;letter-spacing:0.356px;'>Avatar</span>
<div class="a" style="left:1066px;top:281px;width:186px;height:16px;border:1px solid #828282;border-top-color:#5e5e5e;border-left-color:#6a6a6a;border-bottom-color:#8c8c8c;background:#a9a9a9;box-shadow:inset 0 1px 0 #9b9b9b,inset 0 -1px 0 #b8b8b8;"></div>
<span class="t" style='left:1082.5px;top:283px;font:11px "DejaVu Sans", sans-serif;color:#000;letter-spacing:0.267px;'>AsianBoyAvatar</span>
<svg class="a" style="left:1259px;top:284px;" width="9" height="9" viewBox="0 0 9 9"><circle cx="4.5" cy="4.5" r="3.6" fill="none" stroke="#444" stroke-width="1"/><circle cx="4.5" cy="4.5" r="1.1" fill="#444"/></svg>
<span class="t" style='left:948.5px;top:301px;font:11px "DejaVu Sans", sans-serif;color:#000;letter-spacing:0.108px;'>Apply Root Motion</span>
<div class="a" style="left:1067px;top:300.5px;width:12px;height:12px;border:1px solid #555;border-radius:2px;background:linear-gradient(#8dabdc,#5f84c2);"></div>
<svg class="a" style="left:1067px;top:299.5px;" width="13" height="12" viewBox="0 0 13 12"><path d="M2.6 6.2L5 9.2L10.2 1.6" fill="none" stroke="#000" stroke-width="1.9"/></svg>
<span class="t" style='left:948.5px;top:319px;font:11px "DejaVu Sans", sans-serif;color:#000;letter-spacing:-0.031px;'>Update Mode</span>
<div class="a" style="left:1066px;top:317.5px;width:204px;height:14px;border:1px solid #565656;border-radius:3px;background:linear-gradient(#c6c6c6,#a6a6a6);"></div>
<span class="t" style='left:1072.5px;top:319.5px;font:9px "DejaVu Sans", sans-serif;color:#000;letter-spacing:0.484px;-webkit-text-stroke:0.2px #000;'>Normal</span>
<svg class="a" style="left:1260px;top:320.5px;" width="4" height="7" viewBox="0 0 4 7"><path d="M0 2.7L2 0L4 2.7Z M0 4.3H4L2 7Z" fill="#333"/></svg>
<span class="t" style='left:948.5px;top:337px;font:11px "DejaVu Sans", sans-serif;color:#000;letter-spacing:0.068px;'>Culling Mode</span>
<div class="a" style="left:1066px;top:335.5px;width:204px;height:14px;border:1px solid #565656;border-radius:3px;background:linear-gradient(#c6c6c6,#a6a6a6);"></div>
<span class="t" style='left:1072.5px;top:337.5px;font:9px "DejaVu Sans", sans-serif;color:#000;letter-spacing:0.606px;-webkit-text-stroke:0.2px #000;'>Cull Update Transforms</span>
<svg class="a" style="left:1260px;top:338.5px;" width="4" height="7" viewBox="0 0 4 7"><path d="M0 2.7L2 0L4 2.7Z M0 4.3H4L2 7Z" fill="#333"/></svg>
<div class="a" style="left:946px;top:355px;width:324px;height:72px;border:1px solid #6c6c6c;border-radius:3px;background:#a0a0a0;"></div>
<span class="t" style='left:983.5px;top:358.5px;font:9px "DejaVu Sans", sans-serif;color:#1c1c1c;letter-spacing:0.607px;'>Clip Count: 0</span>
<span class="t" style='left:983.5px;top:369.5px;font:9px "DejaVu Sans", sans-serif;color:#1c1c1c;letter-spacing:0.739px;'>Curves Pos: 0 Quat: 0 Euler: 0 Scale: 0 Muscles: 0</span>
<span class="t" style='left:983.5px;top:380.5px;font:9px "DejaVu Sans", sans-serif;color:#1c1c1c;letter-spacing:0.710px;'>Generic: 0 PPtr: 0</span>
<span class="t" style='left:983.5px;top:391.5px;font:9px "DejaVu Sans", sans-serif;color:#1c1c1c;letter-spacing:0.739px;'>Curves Count: 0 Constant: 0 (0.0%) Dense: 0 (0.0%)</span>
<span class="t" style='left:983.5px;top:402.5px;font:9px "DejaVu Sans", sans-serif;color:#1c1c1c;letter-spacing:0.738px;'>Stream: 0 (0.0%)</span>
<svg class="a" style="left:955px;top:382px;" width="21" height="19" viewBox="0 0 21 19"><path d="M10.5 1C16 1 20 4.2 20 8.6C20 13 16 16.2 10.5 16.2C9.3 16.2 8.2 16 7.2 15.8L3.8 18L4.6 14.6C2.4 13.2 1 11 1 8.6C1 4.2 5 1 10.5 1Z" fill="#e4e4e4" stroke="#5a5a5a" stroke-width="1"/><path d="M10.5 4V10.5" stroke="#444" stroke-width="1.8"/><circle cx="10.5" cy="13" r="1.1" fill="#444"/></svg>
<div class="a" style="left:933px;top:433px;width:341px;height:1px;background:#6a6a6a;"></div>
<svg class="a" style="left:937px;top:440px;" width="9" height="8" viewBox="0 0 9 8"><path d="M0 0H9L4.5 8Z" fill="#5c5c5c"/></svg>
<div class="a" style="left:967px;top:437px;width:12px;height:12px;border:1px solid #555;border-radius:2px;background:linear-gradient(#8dabdc,#5f84c2);"></div>
<svg class="a" style="left:967px;top:436px;" width="13" height="12" viewBox="0 0 13 12"><path d="M2.6 6.2L5 9.2L10.2 1.6" fill="none" stroke="#000" stroke-width="1.9"/></svg>
<span class="t" style='left:983px;top:438px;font:bold 11px "DejaVu Sans", sans-serif;color:#000;letter-spacing:0.300px;'>Character Controller</span>
<svg class="a" style="left:1240px;top:436px;" width="15" height="15" viewBox="0 0 15 15"><defs><linearGradient id="bk436" x1="0" y1="0" x2="0" y2="1"><stop offset="0" stop-color="#7d9ac6"/><stop offset="1" stop-color="#2c487a"/></linearGradient></defs><path d="M1.4 1.6L3.4 0.8H13.2V12.6L11.6 14L1.4 12.6Z" fill="#1f3559"/><path d="M3.6 1.8L11.8 2.6V13.4L3.6 12.2Z" fill="url(#bk436)"/><path d="M12 2.6L13 1.4V12.4L12 13.4Z" fill="#e6e6e6"/><text x="7.7" y="10.4" font-size="8" font-family="DejaVu Sans, sans-serif" text-anchor="middle" fill="#d4deee">?</text></svg>
<svg class="a" style="left:1258px;top:436px;" width="15" height="14" viewBox="0 0 15 14"><g transform="translate(6,6)"><circle r="2.9" fill="none" stroke="#222" stroke-width="2"/><rect x="-1" y="-5" width="2" height="2.4" fill="#222" transform="rotate(0)"/><rect x="-1" y="-5" width="2" height="2.4" fill="#222" transform="rotate(45)"/><rect x="-1" y="-5" width="2" height="2.4" fill="#222" transform="rotate(90)"/><rect x="-1" y="-5" width="2" height="2.4" fill="#222" transform="rotate(135)"/><rect x="-1" y="-5" width="2" height="2.4" fill="#222" transform="rotate(180)"/><rect x="-1" y="-5" width="2" height="2.4" fill="#222" transform="rotate(225)"/><rect x="-1" y="-5" width="2" height="2.4" fill="#222" transform="rotate(270)"/><rect x="-1" y="-5" width="2" height="2.4" fill="#222" transform="rotate(315)"/></g><path d="M10.8 8.4H14L12.4 11.2Z" fill="#222"/></svg>
<span class="t" style='left:948.5px;top:454px;font:11px "DejaVu Sans", sans-serif;color:#000;letter-spacing:0.120px;'>Slope Limit</span>
<div class="a" style="left:1066px;top:452px;width:204px;height:16px;border:1px solid #828282;border-top-color:#5e5e5e;border-left-color:#6a6a6a;border-bottom-color:#8c8c8c;background:#a9a9a9;box-shadow:inset 0 1px 0 #9b9b9b,inset 0 -1px 0 #b8b8b8;"></div>
<span class="t" style='left:1068.8px;top:454px;font:11px "DejaVu Sans", sans-serif;color:#000;letter-spacing:0.25px;'>45</span>
<span class="t" style='left:948.5px;top:472px;font:11px "DejaVu Sans", sans-serif;color:#000;letter-spacing:0.191px;'>Step Offset</span>
<div class="a" style="left:1066px;top:470px;width:204px;height:16px;border:1px solid #828282;border-top-color:#5e5e5e;border-left-color:#6a6a6a;border-bottom-color:#8c8c8c;background:#a9a9a9;box-shadow:inset 0 1px 0 #9b9b9b,inset 0 -1px 0 #b8b8b8;"></div>
<span class="t" style='left:1068.8px;top:472px;font:11px "DejaVu Sans", sans-serif;color:#000;letter-spacing:0.25px;'>0.3</span>
<span class="t" style='left:948.5px;top:490px;font:11px "DejaVu Sans", sans-serif;color:#000;letter-spacing:0.128px;'>Skin Width</span>
<div class="a" style="left:1066px;top:488px;width:204px;height:16px;border:1px solid #828282;border-top-color:#5e5e5e;border-left-color:#6a6a6a;border-bottom-color:#8c8c8c;background:#a9a9a9;box-shadow:inset 0 1px 0 #9b9b9b,inset 0 -1px 0 #b8b8b8;"></div>
<span class="t" style='left:1068.8px;top:490px;font:11px "DejaVu Sans", sans-serif;color:#000;letter-spacing:0.25px;'>0.08</span>
<span class="t" style='left:948.5px;top:508px;font:11px "DejaVu Sans", sans-serif;color:#000;letter-spacing:0.056px;'>Min Move Distance</span>
<div class="a" style="left:1066px;top:506px;width:204px;height:16px;border:1px solid #828282;border-top-color:#5e5e5e;border-left-color:#6a6a6a;border-bottom-color:#8c8c8c;background:#a9a9a9;box-shadow:inset 0 1px 0 #9b9b9b,inset 0 -1px 0 #b8b8b8;"></div>
<span class="t" style='left:1068.8px;top:508px;font:11px "DejaVu Sans", sans-serif;color:#000;letter-spacing:0.25px;'>0.001</span>
<span class="t" style='left:948.5px;top:526px;font:11px "DejaVu Sans", sans-serif;color:#000;letter-spacing:0.294px;'>Center</span>
<span class="t" style='left:1067.5px;top:526px;font:11px "DejaVu Sans", sans-serif;color:#000;'>X</span>
<div class="a" style="left:1078px;top:524px;width:54px;height:16px;border:1px solid #828282;border-top-color:#5e5e5e;border-left-color:#6a6a6a;border-bottom-color:#8c8c8c;background:#a9a9a9;box-shadow:inset 0 1px 0 #9b9b9b,inset 0 -1px 0 #b8b8b8;"></div>
<div class="a" style="left:1079px;top:525px;width:52px;height:13px;overflow:hidden;"><span class="t" style='left:2.5px;top:1px;font:11px "DejaVu Sans", sans-serif;letter-spacing:0.25px;'>0</span></div>
<span class="t" style='left:1136.5px;top:526px;font:11px "DejaVu Sans", sans-serif;color:#000;'>Y</span>
<div class="a" style="left:1147px;top:524px;width:54px;height:16px;border:1px solid #828282;border-top-color:#5e5e5e;border-left-color:#6a6a6a;border-bottom-color:#8c8c8c;background:#a9a9a9;box-shadow:inset 0 1px 0 #9b9b9b,inset 0 -1px 0 #b8b8b8;"></div>
<div class="a" style="left:1148px;top:525px;width:52px;height:13px;overflow:hidden;"><span class="t" style='left:2.5px;top:1px;font:11px "DejaVu Sans", sans-serif;letter-spacing:0.25px;'>0.87</span></div>
<span class="t" style='left:1206px;top:526px;font:11px "DejaVu Sans", sans-serif;color:#000;'>Z</span>
<div class="a" style="left:1216px;top:524px;width:54px;height:16px;border:1px solid #828282;border-top-color:#5e5e5e;border-left-color:#6a6a6a;border-bottom-color:#8c8c8c;background:#a9a9a9;box-shadow:inset 0 1px 0 #9b9b9b,inset 0 -1px 0 #b8b8b8;"></div>
<div class="a" style="left:1217px;top:525px;width:52px;height:13px;overflow:hidden;"><span class="t" style='left:2.5px;top:1px;font:11px "DejaVu Sans", sans-serif;letter-spacing:0.25px;'>0</span></div>
<span class="t" style='left:948.5px;top:544px;font:11px "DejaVu Sans", sans-serif;color:#000;letter-spacing:0.022px;'>Radius</span>
<div class="a" style="left:1066px;top:542px;width:204px;height:16px;border:1px solid #828282;border-top-color:#5e5e5e;border-left-color:#6a6a6a;border-bottom-color:#8c8c8c;background:#a9a9a9;box-shadow:inset 0 1px 0 #9b9b9b,inset 0 -1px 0 #b8b8b8;"></div>
<span class="t" style='left:1068.8px;top:544px;font:11px "DejaVu Sans", sans-serif;color:#000;letter-spacing:0.25px;'>0.5</span>
<span class="t" style='left:948.5px;top:562px;font:11px "DejaVu Sans", sans-serif;color:#000;letter-spacing:-0.075px;'>Height</span>
<div class="a" style="left:1066px;top:560px;width:204px;height:16px;border:1px solid #828282;border-top-color:#5e5e5e;border-left-color:#6a6a6a;border-bottom-color:#8c8c8c;background:#a9a9a9;box-shadow:inset 0 1px 0 #9b9b9b,inset 0 -1px 0 #b8b8b8;"></div>
<span class="t" style='left:1068.8px;top:562px;font:11px "DejaVu Sans", sans-serif;color:#000;letter-spacing:0.25px;'>1.7</span>
<div class="a" style="left:933px;top:580px;width:341px;height:1px;background:#6a6a6a;"></div>
<svg class="a" style="left:937px;top:587px;" width="9" height="8" viewBox="0 0 9 8"><path d="M0 0H9L4.5 8Z" fill="#5c5c5c"/></svg>
<div class="a" style="left:967px;top:584px;width:12px;height:12px;border:1px solid #555;border-radius:2px;background:linear-gradient(#8dabdc,#5f84c2);"></div>
<svg class="a" style="left:967px;top:583px;" width="13" height="12" viewBox="0 0 13 12"><path d="M2.6 6.2L5 9.2L10.2 1.6" fill="none" stroke="#000" stroke-width="1.9"/></svg>
<span class="t" style='left:983px;top:585px;font:bold 11px "DejaVu Sans", sans-serif;color:#000;letter-spacing:0.363px;'>Player Move (Script)</span>
<svg class="a" style="left:1240px;top:583px;" width="15" height="15" viewBox="0 0 15 15"><defs><linearGradient id="bk583" x1="0" y1="0" x2="0" y2="1"><stop offset="0" stop-color="#7d9ac6"/><stop offset="1" stop-color="#2c487a"/></linearGradient></defs><path d="M1.4 1.6L3.4 0.8H13.2V12.6L11.6 14L1.4 12.6Z" fill="#1f3559"/><path d="M3.6 1.8L11.8 2.6V13.4L3.6 12.2Z" fill="url(#bk583)"/><path d="M12 2.6L13 1.4V12.4L12 13.4Z" fill="#e6e6e6"/><text x="7.7" y="10.4" font-size="8" font-family="DejaVu Sans, sans-serif" text-anchor="middle" fill="#d4deee">?</text></svg>
<svg class="a" style="left:1258px;top:583px;" width="15" height="14" viewBox="0 0 15 14"><g transform="translate(6,6)"><circle r="2.9" fill="none" stroke="#222" stroke-width="2"/><rect x="-1" y="-5" width="2" height="2.4" fill="#222" transform="rotate(0)"/><rect x="-1" y="-5" width="2" height="2.4" fill="#222" transform="rotate(45)"/><rect x="-1" y="-5" width="2" height="2.4" fill="#222" transform="rotate(90)"/><rect x="-1" y="-5" width="2" height="2.4" fill="#222" transform="rotate(135)"/><rect x="-1" y="-5" width="2" height="2.4" fill="#222" transform="rotate(180)"/><rect x="-1" y="-5" width="2" height="2.4" fill="#222" transform="rotate(225)"/><rect x="-1" y="-5" width="2" height="2.4" fill="#222" transform="rotate(270)"/><rect x="-1" y="-5" width="2" height="2.4" fill="#222" transform="rotate(315)"/></g><path d="M10.8 8.4H14L12.4 11.2Z" fill="#222"/></svg>
<span class="t" style='left:948.5px;top:601px;font:11px "DejaVu Sans", sans-serif;color:#6a6a6a;letter-spacing:0.019px;'>Script</span>
<div class="a" style="left:1066px;top:599px;width:186px;height:16px;border:1px solid #828282;border-top-color:#5e5e5e;border-left-color:#6a6a6a;border-bottom-color:#8c8c8c;background:#a9a9a9;box-shadow:inset 0 1px 0 #9b9b9b,inset 0 -1px 0 #b8b8b8;"></div>
<span class="t" style='left:1082.5px;top:601px;font:11px "DejaVu Sans", sans-serif;color:#666;letter-spacing:0.141px;'>PlayerMove</span>
<svg class="a" style="left:1259px;top:602px;" width="9" height="9" viewBox="0 0 9 9"><circle cx="4.5" cy="4.5" r="3.6" fill="none" stroke="#444" stroke-width="1"/><circle cx="4.5" cy="4.5" r="1.1" fill="#444"/></svg>
<span class="t" style='left:948.5px;top:619px;font:11px "DejaVu Sans", sans-serif;color:#000;letter-spacing:0.049px;'>Velocity</span>
<div class="a" style="left:1066px;top:617px;width:204px;height:16px;border:1px solid #828282;border-top-color:#5e5e5e;border-left-color:#6a6a6a;border-bottom-color:#8c8c8c;background:#a9a9a9;box-shadow:inset 0 1px 0 #9b9b9b,inset 0 -1px 0 #b8b8b8;"></div>
<span class="t" style='left:1068.8px;top:619px;font:11px "DejaVu Sans", sans-serif;color:#000;letter-spacing:0.25px;'>1.3</span>
<div class="a" style="left:933px;top:635px;width:341px;height:1px;background:#6a6a6a;"></div>
<div class="a" style="left:986px;top:646px;width:230px;height:23px;border:1px solid #4a4a4a;border-radius:3px;background:linear-gradient(#d0d0d0,#a4a4a4);"></div>
<span class="t" style='left:1051px;top:649.5px;font:12px "DejaVu Sans", sans-serif;color:#000;letter-spacing:0.398px;'>Add Component</span>
<div class="a" style="left:933px;top:730px;width:340px;height:17px;background:linear-gradient(#4a4a4a,#323232);border-top:1px solid #222;border-bottom:1px solid #1e1e1e;"></div>
<span class="t" style='left:938.7px;top:732px;font:bold 11px "DejaVu Sans", sans-serif;color:#c4c4c4;letter-spacing:0.105px;'>Asset Labels</span>
<div class="a" style="left:933px;top:747px;width:340px;height:46px;background:#282828;"></div>
<div class="a" style="left:1249px;top:753px;width:20px;height:15px;border-radius:10px/7.5px;background:#2e5ea9;"></div>
<svg class="a" style="left:1253px;top:755px;" width="12" height="11" viewBox="0 0 12 11"><path d="M1 1.5H5L10.5 6.5L7 10L1 4.8Z" fill="#e8e8e8" transform="rotate(8 6 5)"/><circle cx="3.3" cy="3.6" r="0.9" fill="#2e5ea9"/></svg>
<span class="t" style='left:939px;top:777px;font:11px "DejaVu Sans", sans-serif;color:#b4b4b4;letter-spacing:-0.037px;'>AssetBundle</span>
<div class="a" style="left:1027px;top:776px;width:175px;height:14px;border:1px solid #1c1c1c;border-radius:3px;background:linear-gradient(#3e3e3e,#333);"></div>
<span class="t" style='left:1033.5px;top:778px;font:9px "DejaVu Sans", sans-serif;color:#b0b0b0;letter-spacing:0.505px;-webkit-text-stroke:0.2px #b0b0b0;'>None</span>
<svg class="a" style="left:1192px;top:779px;" width="4" height="7" viewBox="0 0 4 7"><path d="M0 2.7L2 0L4 2.7Z M0 4.3H4L2 7Z" fill="#9a9a9a"/></svg>
<div class="a" style="left:1209px;top:776px;width:60px;height:14px;border:1px solid #1c1c1c;border-radius:3px;background:linear-gradient(#3e3e3e,#333);"></div>
<span class="t" style='left:1215.5px;top:778px;font:9px "DejaVu Sans", sans-serif;color:#b0b0b0;letter-spacing:0.505px;-webkit-text-stroke:0.2px #b0b0b0;'>None</span>
<svg class="a" style="left:1259px;top:779px;" width="4" height="7" viewBox="0 0 4 7"><path d="M0 2.7L2 0L4 2.7Z M0 4.3H4L2 7Z" fill="#9a9a9a"/></svg>
<div class="a" style="left:8px;top:500px;width:1px;height:17px;background:#7a7a7a;"></div>
<div class="a" style="left:59px;top:500px;width:1px;height:17px;background:#7a7a7a;"></div>
<span class="t" style='left:15px;top:504.5px;font:9px "DejaVu Sans", sans-serif;color:#000;letter-spacing:0.419px;-webkit-text-stroke:0.2px #000;'>Create</span>
<svg class="a" style="left:52px;top:507px;" width="5" height="4" viewBox="0 0 5 4"><path d="M0 0H5L2.5 3.5Z" fill="#444"/></svg>
<div class="a" style="left:547px;top:502px;width:300px;height:14px;border:1px solid #6a6a6a;border-radius:7px;background:#a6a6a6;box-shadow:inset 0 1px 1px #8a8a8a;"></div>
<svg class="a" style="left:552px;top:504px;" width="11" height="11" viewBox="0 0 11 11"><circle cx="4" cy="4.2" r="2.6" fill="none" stroke="#555" stroke-width="1.1"/><path d="M6 6.4L8.8 9.6" stroke="#555" stroke-width="1.4"/></svg>
<div class="a" style="left:857px;top:500px;width:1px;height:17px;background:#7a7a7a;"></div>
<div class="a" style="left:879px;top:500px;width:1px;height:17px;background:#7a7a7a;"></div>
<div class="a" style="left:901px;top:500px;width:1px;height:17px;background:#7a7a7a;"></div>
<div class="a" style="left:923px;top:500px;width:1px;height:17px;background:#7a7a7a;"></div>
<svg class="a" style="left:862px;top:503px;" width="13" height="12" viewBox="0 0 13 12"><circle cx="7.5" cy="3.6" r="3" fill="#444"/><path d="M0.5 10.5L4 4.5L7.5 10.5Z" fill="#444"/><rect x="8" y="7" width="4.5" height="4.5" fill="#444"/></svg>
<svg class="a" style="left:884px;top:503px;" width="13" height="12" viewBox="0 0 13 12"><path d="M1 1H6L12 7L7.5 11.5L1 5.5Z" fill="#444"/><circle cx="3.6" cy="3.6" r="1" fill="#aaa"/></svg>
<svg class="a" style="left:906px;top:503px;" width="13" height="12" viewBox="0 0 13 12"><path d="M6.5 0.5L8.1 4.6L12.5 4.9L9.1 7.6L10.2 11.8L6.5 9.4L2.8 11.8L3.9 7.6L0.5 4.9L4.9 4.6Z" fill="#858585"/></svg>
<div class="a" style="left:191px;top:518px;width:738px;height:18px;background:#b0b0b0;border-bottom:1px solid #7a7a7a;"></div>
<div class="a" style="left:190px;top:518px;width:1px;height:275px;background:#7a7a7a;"></div>
<span class="t" style='left:197.5px;top:520.5px;font:11px "DejaVu Sans", sans-serif;color:#000;letter-spacing:0.037px;'>Assets</span>
<svg class="a" style="left:240px;top:524px;" width="6" height="7" viewBox="0 0 6 7"><path d="M0 0L6 3.5L0 7Z" fill="#777"/></svg>
<span class="t" style='left:252.5px;top:520.5px;font:bold 11px "DejaVu Sans", sans-serif;color:#000;letter-spacing:-0.031px;'>Models</span>
<svg class="a" style="left:303px;top:524px;" width="6" height="7" viewBox="0 0 6 7"><path d="M0 0L6 3.5L0 7Z" fill="#777"/></svg>
<div class="a" style="left:191px;top:776px;width:738px;height:17px;background:#b0b0b0;border-top:1px solid #7a7a7a;"></div>
<div class="a" style="left:858px;top:784px;width:56px;height:2px;background:#7c7c7c;border-radius:1px;"></div>
<div class="a" style="left:884px;top:779px;width:11px;height:11px;border:1px solid #4e4e4e;border-radius:6px;background:linear-gradient(#dcdcdc,#aaa);"></div>
<svg class="a" style="left:8px;top:523px;" width="7" height="8" viewBox="0 0 7 8"><path d="M0 0L7 4L0 8Z" fill="#5e5e5e"/></svg>
<svg class="a" style="left:18px;top:519px;" width="17" height="16" viewBox="0 0 17 16"><path d="M8.5 0.8L10.9 5.9L16.4 6.6L12.3 10.3L13.4 15.7L8.5 13L3.6 15.7L4.7 10.3L0.6 6.6L6.1 5.9Z" fill="#f6c629" stroke="#9a7410" stroke-width="0.8"/></svg>
<span class="t" style='left:36.5px;top:520.5px;font:bold 11px "DejaVu Sans", sans-serif;color:#000;letter-spacing:0.377px;'>Favorites</span>
<svg class="a" style="left:7px;top:554px;" width="9" height="8" viewBox="0 0 9 8"><path d="M0 0H9L4.5 8Z" fill="#5a5a5a"/></svg>
<svg class="a" style="left:18px;top:551px;" width="16" height="13" viewBox="0 0 16 13"><path d="M0.5 2.5Q0.5 1 2 1H5.5Q6.5 1 7 2L7.5 2.8H13.5Q14.8 2.8 14.8 4V10.5Q14.8 11.8 13.5 11.8H1.8Q0.5 11.8 0.5 10.5Z" fill="#6b7378" stroke="#4a5054" stroke-width="0.8"/><path d="M1 4.2H14.4" stroke="#c9ced1" stroke-width="1.2"/></svg>
<span class="t" style='left:36.5px;top:551.5px;font:bold 11px "DejaVu Sans", sans-serif;color:#000;letter-spacing:0.225px;'>Assets</span>
<div class="a" style="left:3px;top:565px;width:187px;height:16px;background:#8d8d8d;"></div>
<svg class="a" style="left:21px;top:569px;" width="7" height="8" viewBox="0 0 7 8"><path d="M0 0L7 4L0 8Z" fill="#5e5e5e"/></svg>
<svg class="a" style="left:32px;top:567px;" width="16" height="13" viewBox="0 0 16 13"><path d="M0.5 2.5Q0.5 1 2 1H5.5Q6.5 1 7 2L7.5 2.8H13.5Q14.8 2.8 14.8 4V10.5Q14.8 11.8 13.5 11.8H1.8Q0.5 11.8 0.5 10.5Z" fill="#6b7378" stroke="#4a5054" stroke-width="0.8"/><path d="M1 4.2H14.4" stroke="#c9ced1" stroke-width="1.2"/></svg>
<span class="t" style='left:51px;top:567.5px;font:11px "DejaVu Sans", sans-serif;color:#cfcfcf;letter-spacing:-0.253px;'>Models</span>
<svg class="a" style="left:32px;top:583px;" width="16" height="13" viewBox="0 0 16 13"><path d="M0.5 2.5Q0.5 1 2 1H5.5Q6.5 1 7 2L7.5 2.8H13.5Q14.8 2.8 14.8 4V10.5Q14.8 11.8 13.5 11.8H1.8Q0.5 11.8 0.5 10.5Z" fill="#6b7378" stroke="#4a5054" stroke-width="0.8"/><path d="M1 4.2H14.4" stroke="#c9ced1" stroke-width="1.2"/></svg>
<span class="t" style='left:51px;top:583.5px;font:11px "DejaVu Sans", sans-serif;color:#000;letter-spacing:-0.023px;'>Scripts</span>
<svg class="a" style="left:210px;top:555px;" width="58" height="46" viewBox="0 0 58 46"><defs><linearGradient id="fg" x1="0" y1="0" x2="0" y2="1"><stop offset="0" stop-color="#66737c"/><stop offset="1" stop-color="#46525a"/></linearGradient><linearGradient id="ft" x1="0" y1="0" x2="0" y2="1"><stop offset="0" stop-color="#cacaca"/><stop offset="1" stop-color="#a4a4a4"/></linearGradient></defs><path d="M1 4Q1 0.8 4 0.8H20Q22.4 0.8 23.4 2.6L24.4 4H53.4Q56.6 4 56.6 7V12H1Z" fill="url(#ft)"/><path d="M1 10Q1 7 4 7H53.6Q56.6 7 56.6 10V41.6Q56.6 44.6 53.6 44.6H4Q1 44.6 1 41.6Z" fill="url(#fg)"/><path d="M1.4 10Q1.4 7.4 4 7.4H53.6Q56.2 7.4 56.2 10V12L1.4 34Z" fill="#ffffff" opacity="0.05"/><path d="M1.5 41.6Q1.5 44.1 4 44.1H53.6Q56.1 44.1 56.1 41.6" fill="none" stroke="#333c42" stroke-width="1"/></svg>
<svg class="a" style="left:286px;top:555px;" width="58" height="46" viewBox="0 0 58 46"><defs><linearGradient id="fg2" x1="0" y1="0" x2="0" y2="1"><stop offset="0" stop-color="#66737c"/><stop offset="1" stop-color="#46525a"/></linearGradient><linearGradient id="ft" x1="0" y1="0" x2="0" y2="1"><stop offset="0" stop-color="#cacaca"/><stop offset="1" stop-color="#a4a4a4"/></linearGradient></defs><path d="M1 4Q1 0.8 4 0.8H20Q22.4 0.8 23.4 2.6L24.4 4H53.4Q56.6 4 56.6 7V12H1Z" fill="url(#ft)"/><path d="M1 10Q1 7 4 7H53.6Q56.6 7 56.6 10V41.6Q56.6 44.6 53.6 44.6H4Q1 44.6 1 41.6Z" fill="url(#fg2)"/><path d="M1.4 10Q1.4 7.4 4 7.4H53.6Q56.2 7.4 56.2 10V12L1.4 34Z" fill="#ffffff" opacity="0.05"/><path d="M1.5 41.6Q1.5 44.1 4 44.1H53.6Q56.1 44.1 56.1 41.6" fill="none" stroke="#333c42" stroke-width="1"/></svg>
<div class="a" style="left:361px;top:548px;width:60px;height:60px;background:#414141;"></div>
<span class="t" style='left:215.5px;top:613.5px;font:9px "DejaVu Sans", sans-serif;color:#000;letter-spacing:0.592px;-webkit-text-stroke:0.2px #000;'>Materials</span>
<span class="t" style='left:294px;top:613.5px;font:9px "DejaVu Sans", sans-serif;color:#000;letter-spacing:0.471px;-webkit-text-stroke:0.2px #000;'>textures</span>
<span class="t" style='left:368px;top:613.5px;font:9px "DejaVu Sans", sans-serif;color:#000;letter-spacing:0.703px;-webkit-text-stroke:0.2px #000;'>AsianBoy</span>
<svg class="a" style="left:415px;top:570px;" width="15" height="15" viewBox="0 0 15 15"><circle cx="7.4" cy="7.2" r="6.4" fill="#4c4c4c" stroke="#c2c2c2" stroke-width="1.2"/><path d="M5.6 4.6L10.4 7.2L5.6 9.8Z" fill="#f4f4f4"/></svg>
<svg class="a" style="left:379px;top:558px;" width="24" height="40" viewBox="0 0 24 40"><defs><filter id="bl2"><feGaussianBlur stdDeviation="0.3"/></filter></defs><g filter="url(#bl2)"><ellipse cx="12.6" cy="3.4" rx="1.7" ry="2" fill="#3b3f48"/><path d="M2 13.2L9 9.2L11 6.2H14.4L21 4.8L21.4 5.8L14.8 8.6V17H10.4V10.6L2.6 14.2Z" fill="#2f477a"/><path d="M2 13L3.4 12.4L3.8 13.6L2.4 14.2Z M20.2 4.8L21.6 4.6L21.6 5.8L20.4 6Z" fill="#c9a88c"/><path d="M10.4 17H14.8L14.6 28L14 35.4H12.2L12.6 24L12 35.4H10.6Z" fill="#3d5a8c"/><path d="M10.6 35.2H12.4V36.6H10.6Z M12.6 35.4H14.6V36.8H12.6Z" fill="#b5694a"/></g></svg>
<svg class="a" style="left:12px;top:57px;" width="160" height="22" viewBox="0 0 160 22"><path d="M15.6 19.2C13.6 17.2 11 15.2 9.2 13.4C8 12.2 8 10.4 9.4 10.4C10.6 10.4 11.6 11.6 12.6 12.6L11.6 6.4C11.4 4.8 13.4 4.6 13.8 6.2L14.6 10.4L14.4 5C14.4 3.2 16.6 3.2 16.8 5L17.2 10.2L17.6 5.4C17.8 3.8 19.8 4 19.8 5.6V10.6L20.6 7.6C21 6.2 22.8 6.6 22.6 8.2L22 13C21.8 15.6 21 17.4 20 19.2" fill="none" stroke="#cacaca" stroke-width="1.1" stroke-linejoin="round" stroke-linecap="round"/><g fill="#111" stroke="none"><rect x="41.5" y="9.2" width="14" height="2.4"/><rect x="47.3" y="3.4" width="2.4" height="14"/><path d="M48.5 1.4L52.4 6H44.6Z M48.5 19.4L52.4 14.8H44.6Z M39.6 10.4L44.2 6.5V14.3Z M57.4 10.4L52.8 6.5V14.3Z"/></g><g transform="translate(162.4,0.4) scale(-1,1)"><g fill="none" stroke="#111" stroke-width="2.1"><path d="M75.6 8.2A5.9 5.9 0 0 1 86 5.8"/><path d="M86.8 12A5.9 5.9 0 0 1 76.2 14.2"/></g><path d="M83 7.6L88.4 8L87.8 2.6Z M79.2 12.6L73.8 12.2L74.4 17.6Z" fill="#111"/></g><rect x="109.6" y="7.6" width="5.8" height="5.8" fill="none" stroke="#111" stroke-width="2"/><g stroke="#111" stroke-width="1.5" fill="none"><path d="M108.4 6.4L105.4 3.4M116.6 6.4L119.6 3.4M108.4 14.6L105.4 17.6M116.6 14.6L119.6 17.6"/></g><path d="M104.2 2.2H108.6L104.2 6.6Z M120.8 2.2H116.4L120.8 6.6Z M104.2 18.8H108.6L104.2 14.4Z M120.8 18.8H116.4L120.8 14.4Z" fill="#111"/><path d="M140.4 3.6H148M140.4 17.4H148M137.4 6.4V14.6M151 6.4V14.6" fill="none" stroke="#111" stroke-width="1.5"/><g fill="#111"><circle cx="137.4" cy="3.8" r="2"/><circle cx="151" cy="3.8" r="2"/><circle cx="137.4" cy="17.2" r="2"/><circle cx="151" cy="17.2" r="2"/></g><circle cx="144.2" cy="10.5" r="1.9" fill="none" stroke="#111" stroke-width="1.1"/></svg>
<svg class="a" style="left:19px;top:119px;" width="15" height="15" viewBox="0 0 15 15"><path d="M0.4 7L10.6 0.6L13.8 1.6V12.4L10.6 13.4Z" fill="#0e0e0e"/><path d="M3.4 6.1L9.4 2.6L7.9 6.1Z M3.4 7.9H7.9L9.4 11.4Z" fill="#cfcfcf"/><path d="M9.5 7L11.3 3.2L12.5 7L11.3 10.8Z" fill="#f2f2f2"/></svg>
<svg class="a" style="left:225px;top:124px;" width="14" height="5" viewBox="0 0 14 5"><path d="M0 0.6H4.6L2.3 3.4Z" fill="#3c3c3c"/><path d="M6 0.5H14M6 2.5H14M6 4.5H14" stroke="#3c3c3c" stroke-width="1"/></svg>
<svg class="a" style="left:939px;top:108px;" width="23" height="22" viewBox="0 0 23 22"><defs><linearGradient id="cb1" x1="0" y1="0" x2="0" y2="1"><stop offset="0" stop-color="#4a9acb"/><stop offset="1" stop-color="#2f79a9"/></linearGradient></defs><path d="M1 5.4L10.6 1L20.6 4.6V15.4L10.2 20L1 15.6Z" fill="url(#cb1)"/><path d="M1 5.4L10.6 1L20.6 4.6L10.4 8.8Z" fill="#63b4de"/><path d="M10.4 8.8L20.6 4.6V15.4L10.2 20Z" fill="#2c73a2"/><path d="M13.4 9.4H18.6L21.4 12V19.8H13.4Z" fill="#dfe5ea" stroke="#9aa6b0" stroke-width="0.6"/><path d="M1.2 16.6H8.8L5 20.6Z" fill="#1a1a1a"/></svg>
<svg class="a" style="left:948px;top:172px;" width="16" height="14" viewBox="0 0 16 14"><path d="M8 8V1" stroke="#7ab317" stroke-width="2.4"/><path d="M8 8L2 11.6" stroke="#1f8ad0" stroke-width="2.4"/><path d="M8 8L14 11.6" stroke="#c81e28" stroke-width="2.4"/></svg>
<svg class="a" style="left:949px;top:248px;" width="14" height="14" viewBox="0 0 14 14"><g fill="#5f7682"><rect x="0.3" y="0.3" width="5.5" height="5.3"/><rect x="7.1" y="0.3" width="5.8" height="5.3"/><rect x="7.1" y="7.2" width="5.8" height="5.5"/></g><path d="M2.6 5.4L9 8.6" stroke="#a8b8c2" stroke-width="0.8"/><path d="M0.8 7L5.8 10L0.8 13Z" fill="#cc0a14"/></svg>
<svg class="a" style="left:947px;top:435px;" width="17" height="17" viewBox="0 0 17 17"><defs><radialGradient id="cc1" cx="0.45" cy="0.2" r="0.8"><stop offset="0" stop-color="#9fd34a"/><stop offset="0.5" stop-color="#62a012"/><stop offset="1" stop-color="#4d860c"/></radialGradient></defs><path d="M0.8 10L3.4 7.4L6 9.4H11L13.6 7.4L16.2 10L13.6 12.4L11 11.4L8.5 15.8L6 11.4L3.4 12.4Z" fill="#46535c"/><rect x="4.8" y="0.4" width="7.4" height="10.6" rx="3.7" fill="url(#cc1)"/></svg>
<svg class="a" style="left:949px;top:583px;" width="13" height="15" viewBox="0 0 13 15"><path d="M0.6 0.6H8.6L12.4 4.2V14.4H0.6Z" fill="#dde5ea" stroke="#777" stroke-width="0.9"/><path d="M8.6 0.6V4.2H12.4" fill="#f4f7f9" stroke="#888" stroke-width="0.6"/><path d="M6.4 4.6A3.6 4 0 1 0 6.4 11.8" fill="none" stroke="#1e7aa8" stroke-width="1.5"/><path d="M7.4 7.2H11.4M7.4 9.2H11.4M8.6 5.8V10.6M10.2 5.8V10.6" stroke="#1e7aa8" stroke-width="0.9"/></svg>
<svg class="a" style="left:1070px;top:265px;" width="10" height="11" viewBox="0 0 10 11"><path d="M0.8 0.6H6.2L9 3.2V10.4H0.8Z" fill="#cfd3d6" stroke="#909090" stroke-width="0.7"/></svg>
<svg class="a" style="left:1070px;top:283px;" width="10" height="11" viewBox="0 0 10 11"><circle cx="5" cy="2.4" r="1.6" fill="#d9a066"/><path d="M2.2 3.6H3.6V6.2H6.4V3.6H7.8V7.4L6.6 8.4V10.6H3.4V8.4L2.2 7.4Z" fill="#b98a56"/><rect x="3" y="9" width="4" height="1.8" fill="#8d8d8d"/></svg>
<svg class="a" style="left:1070px;top:601px;" width="10" height="11" viewBox="0 0 10 11"><path d="M0.8 0.6H6.2L9 3.2V10.4H0.8Z" fill="#c4c8cb" stroke="#8e8e8e" stroke-width="0.7"/><path d="M5.4 4A2.2 2.4 0 1 0 5.4 8.4" fill="none" stroke="#5a9cc0" stroke-width="1"/><path d="M5.8 5.4H8M5.8 7H8" stroke="#5a9cc0" stroke-width="0.7"/></svg>
<svg class="a" style="left:564px;top:277px;" width="50" height="48" viewBox="0 0 50 48"><defs><filter id="bl1" x="-10%" y="-10%" width="120%" height="120%"><feGaussianBlur stdDeviation="0.35"/></filter></defs><g filter="url(#bl1)"><ellipse cx="24.4" cy="5" rx="2.3" ry="2.9" fill="#5c5a55"/><rect x="23.2" y="7" width="2.6" height="2" fill="#b89880"/><path d="M2.2 10.4L8.6 9.6L19.4 8.6H29.6L41.4 9.6L46.6 10.4V11.6L41.4 11.8L30 12.6L29.4 20.2H19.6L19 12.6L8.6 11.8L2.2 11.6Z" fill="#4b6190"/><path d="M2 10.4H6V11.6H2Z M43 10.4H47V11.6H43Z" fill="#e4d2c0"/><path d="M19.6 20H29.6L29.6 30L29 43H25.6L24.8 26L24.4 26L23.4 43H20L19.4 30Z" fill="#5f7ba2"/><path d="M21.6 22V42M27.4 22V42" stroke="#8aa4c4" stroke-width="0.9"/><path d="M20 43H23.4V44.8H20Z M25.6 43H29V44.8H25.6Z" fill="#b0866e"/><path d="M19.6 19.4H29.6V20.6H19.6Z" fill="#2c3550"/></g></svg>
</div>
</div>
</body></html>
